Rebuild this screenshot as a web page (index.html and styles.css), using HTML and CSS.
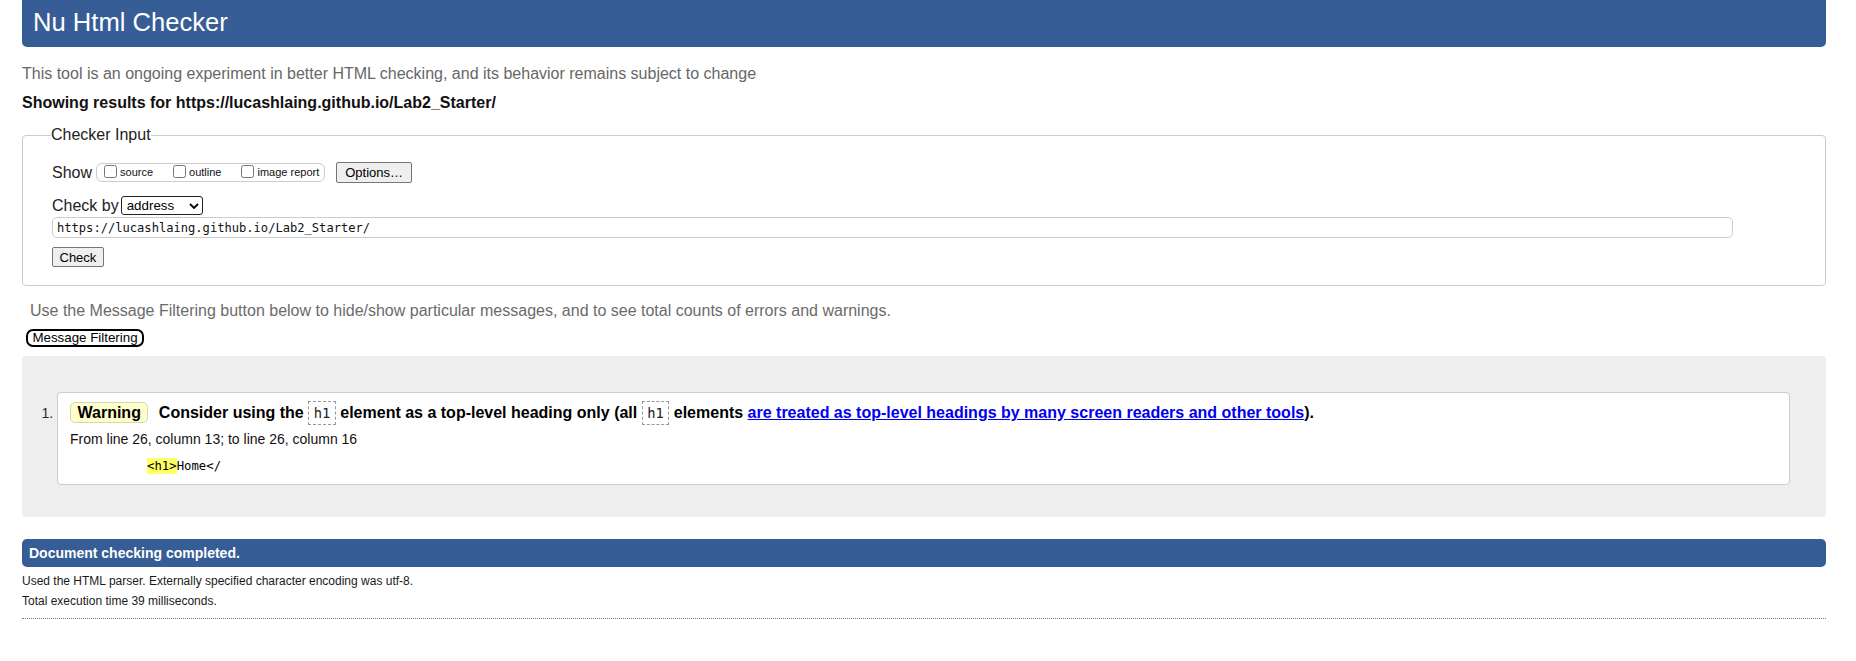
FILE: index.html
```html
<!DOCTYPE html>
<html lang="en">
<head>
<meta charset="utf-8">
<title>Showing results for https://lucashlaing.github.io/Lab2_Starter/ - Nu Html Checker</title>
<link rel="stylesheet" href="styles.css">
</head>
<body>
<h1 class="site-title">Nu Html Checker</h1>
<p class="intro">This tool is an ongoing experiment in better HTML checking, and its behavior remains subject to change</p>
<p class="results-for">Showing results for https://lucashlaing.github.io/Lab2_Starter/</p>
<form class="checker-form">
  <fieldset class="checker-input">
    <legend class="checker-legend">Checker Input</legend>
    <div class="row row-show">
      <span class="row-label">Show</span>
      <span class="show-options">
        <label class="show-option"><input type="checkbox" class="check"><span>source</span></label>
        <label class="show-option"><input type="checkbox" class="check"><span>outline</span></label>
        <label class="show-option"><input type="checkbox" class="check"><span>image report</span></label>
      </span>
      <button type="button" class="btn btn-options">Options…</button>
    </div>
    <div class="row row-checkby">
      <span class="row-label">Check by</span>
      <span class="select-box">
        <select class="select"><option>address</option></select>
        <svg class="chevron" width="10" height="6" viewBox="0 0 10 6" aria-hidden="true"><path d="M1 1 L5 5 L9 1" fill="none" stroke="#000" stroke-width="1.8"/></svg>
      </span>
    </div>
    <div class="row row-url">
      <input class="url-input" type="text" value="https://lucashlaing.github.io/Lab2_Starter/">
    </div>
    <div class="row row-submit">
      <button type="button" class="btn btn-check">Check</button>
    </div>
  </fieldset>
</form>
<p class="filter-note">Use the Message Filtering button below to hide/show particular messages, and to see total counts of errors and warnings.</p>
<div class="filter-bar"><button type="button" class="btn-filter">Message Filtering</button></div>
<div class="results">
  <ol class="messages">
    <li class="message">
      <p class="message-head"><strong class="badge">Warning</strong> <span>Consider using the <code class="tag">h1</code> element as a top-level heading only (all <code class="tag">h1</code> elements <a class="ref-link" href="#">are treated as top-level headings by many screen readers and other tools</a>).</span></p>
      <p class="location">From line 26, column 13; to line 26, column 16</p>
      <p class="extract"><code><mark class="hl">&lt;h1&gt;</mark>Home&lt;/</code></p>
    </li>
  </ol>
</div>
<p class="status-bar">Document checking completed.</p>
<div class="details">
  <p class="detail">Used the HTML parser. Externally specified character encoding was utf-8.</p>
  <p class="detail">Total execution time 39 milliseconds.</p>
</div>
</body>
</html>
```
FILE: styles.css
```css
* { box-sizing: border-box; }

html, body { background: #fff; }

body {
  margin: 0;
  padding: 0 30px 0 22px;
  font-family: "Liberation Sans", Arial, sans-serif;
  font-size: 16px;
  color: #000;
}

.site-title {
  margin: 0;
  height: 47px;
  padding: 0 11px 2px;
  line-height: 45px;
  font-size: 25.6px;
  font-weight: normal;
  color: #fff;
  background: #365d95;
  border-radius: 0 0 5px 5px;
}

.intro {
  margin: 17px 0 0;
  line-height: 20px;
  color: #676767;
}

.results-for {
  margin: 9px 0 0;
  line-height: 20px;
  font-weight: bold;
  color: #111;
}

.checker-form { margin: 0; }

.checker-input {
  margin: 13px 0 0;
  padding: 0 29px 18px;
  border: 1px solid #cccccc;
  border-radius: 4px;
  min-width: 0;
}

.checker-legend {
  padding: 0;
  margin-left: -1px;
  line-height: 18px;
  font-size: 16px;
  color: #222;
}

.row { display: flex; align-items: center; }

.row-label { line-height: 20px; color: #222; }

.row-show { height: 21px; margin-top: 18px; }
.row-show .row-label { margin-right: 4px; }

.show-options {
  display: inline-flex;
  align-items: center;
  gap: 16px;
  height: 19px;
  padding: 0 5px 0 3px;
  border: 1px solid #cccccc;
  border-radius: 6px;
}

.show-option {
  display: inline-flex;
  align-items: center;
  height: 17px;
  font-size: 11px;
  line-height: 13px;
  color: #111;
}

.check {
  width: 13px;
  height: 13px;
  margin: 0 3px 2px 4px;
}

.btn {
  font-family: "Liberation Sans", Arial, sans-serif;
  font-size: 13px;
  color: #000;
  background: #efefef;
  border: 1px solid #767676;
  border-radius: 2px;
}

.btn-options {
  height: 21px;
  margin-left: 11px;
  padding: 0 8px;
}

.row-checkby { height: 19px; margin-top: 13px; }

.select-box {
  display: inline-flex;
  align-items: center;
  height: 19px;
  margin-left: 2px;
  padding: 0 3px 0 5px;
  border: 1px solid #222;
  border-radius: 3px;
}

.select {
  appearance: none;
  -webkit-appearance: none;
  width: 62px;
  height: 17px;
  padding: 0;
  margin: 0;
  border: 0;
  background: transparent;
  font-family: "Liberation Sans", Arial, sans-serif;
  font-size: 13.33px;
  color: #000;
}

.chevron { display: block; }

.row-url { margin-top: 2px; }

.url-input {
  width: 96.4%;
  height: 21px;
  margin: 0;
  padding: 0 4px;
  border: 1px solid #cccccc;
  border-radius: 5px;
  font-family: "DejaVu Sans Mono", "Liberation Mono", monospace;
  font-size: 12.1px;
  color: #111;
}

.row-submit { margin-top: 9px; }

.btn-check {
  height: 20px;
  padding: 0 6.5px;
}

.filter-note {
  margin: 15px 0 0 8px;
  line-height: 20px;
  color: #6b6b6b;
}

.filter-bar {
  display: flex;
  margin: 8px 0 0 4px;
}

.btn-filter {
  height: 18px;
  padding: 0 4.4px;
  line-height: 14px;
  font-family: "Liberation Sans", Arial, sans-serif;
  font-size: 13.33px;
  color: #000;
  background: #fff;
  border: 2px solid #000;
  border-radius: 7px;
}

.results {
  margin-top: 9px;
  padding: 36px 36px 32px 35px;
  background: #eeeeee;
  border-radius: 4px;
}

.messages {
  margin: 0;
  padding: 0;
  list-style: decimal outside;
}

.message {
  padding: 8px 12px 8px;
  background: #fff;
  border: 1px solid #cccccc;
  border-radius: 4px;
}

.message::marker {
  font-size: 14px;
  color: #2a2a3a;
}

.message-head {
  margin: 0;
  line-height: 24px;
  font-weight: bold;
  color: #000;
}

.badge {
  display: inline-block;
  margin-right: 6px;
  padding: 0 6.5px;
  line-height: 19px;
  background: #ffffcc;
  border: 1px solid #d6d6b0;
  border-radius: 5px;
}

.tag {
  display: inline-block;
  padding: 0 4.5px;
  line-height: 22px;
  font-family: "DejaVu Sans Mono", "Liberation Mono", monospace;
  font-size: 13.8px;
  font-weight: normal;
  color: #222;
  border: 1px dashed #999;
}

.ref-link { color: #0000ee; text-decoration: underline; }

.location {
  margin: 4px 0 0;
  font-size: 14px;
  line-height: 20px;
  color: #111;
}

.extract {
  margin: 6px 0 0 77px;
  line-height: 20px;
}

.extract code {
  font-family: "DejaVu Sans Mono", "Liberation Mono", monospace;
  font-size: 12.3px;
  color: #000;
}

.hl {
  padding: 1px 0;
  background: #ffff66;
  color: inherit;
}

.status-bar {
  margin: 22px 0 0;
  height: 28px;
  padding: 0 7px;
  line-height: 28px;
  font-size: 14px;
  font-weight: bold;
  color: #fff;
  background: #365d95;
  border-radius: 5px;
}

.details {
  margin-top: 4px;
  padding-bottom: 7px;
  border-bottom: 1px dotted #777;
}

.detail {
  margin: 0;
  font-size: 12px;
  line-height: 20px;
  color: #1a1a1a;
}
```
